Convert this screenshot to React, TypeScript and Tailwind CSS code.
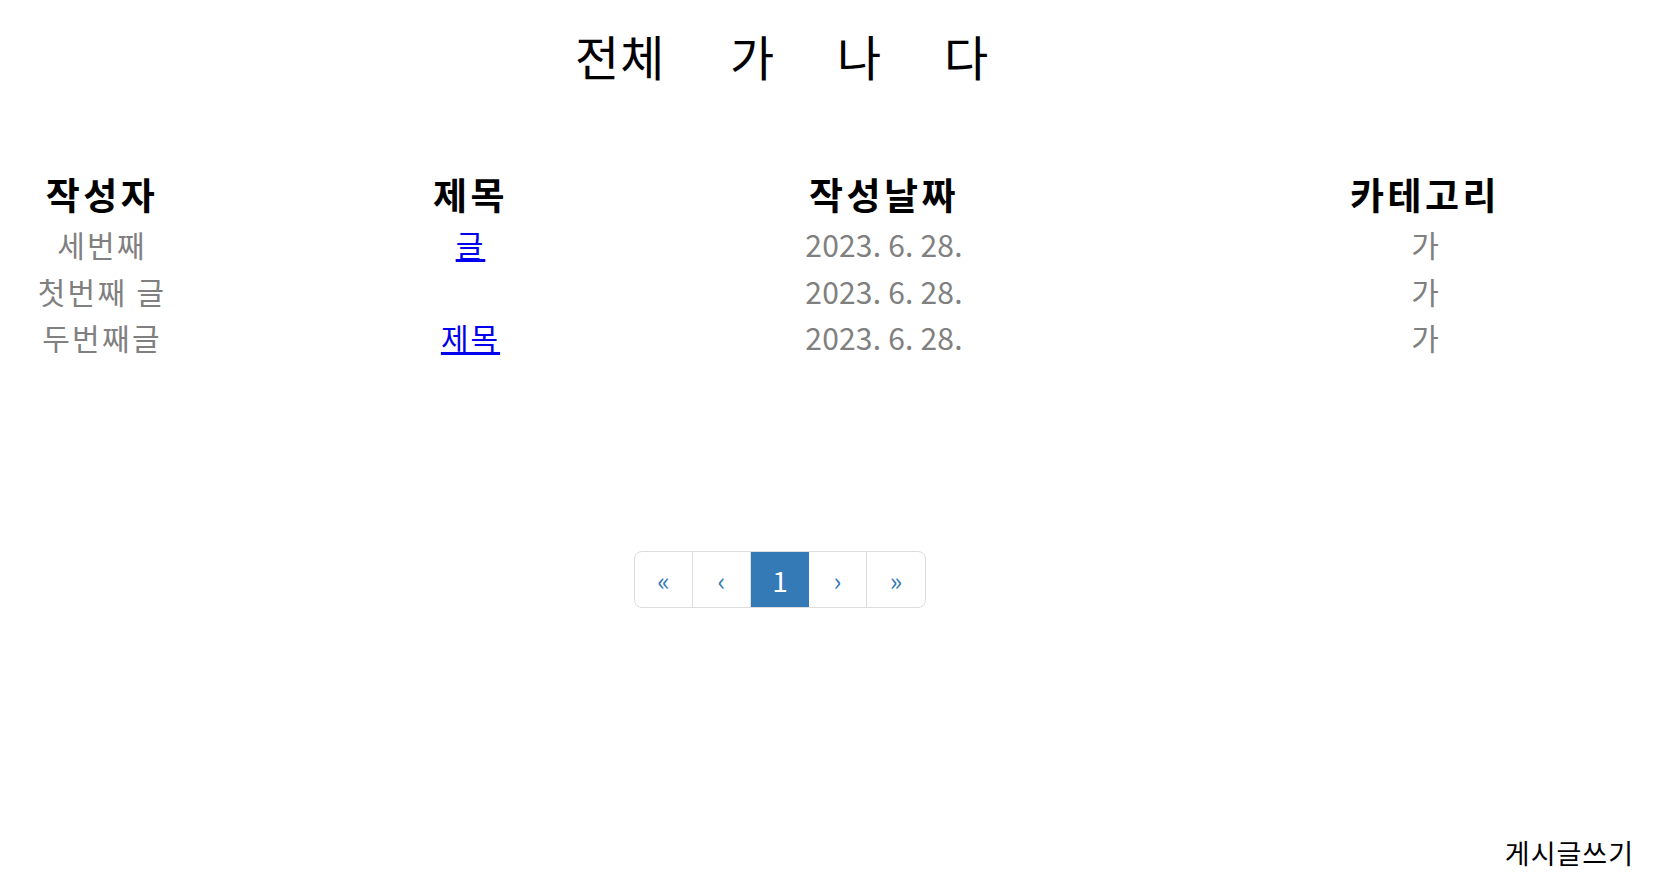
const rows = [
  { author: '세번째', title: '글', date: '2023. 6. 28.', category: '가' },
  { author: '첫번째 글', title: '', date: '2023. 6. 28.', category: '가' },
  { author: '두번째글', title: '제목', date: '2023. 6. 28.', category: '가' },
];

const font = { fontFamily: '"Noto Sans CJK KR", "Noto Sans", sans-serif' };

export default function App() {
  return (
    <div className="relative h-[892px] w-full bg-white" style={font}>
      {/* 카테고리 필터 */}
      <nav className="grid h-[110px] grid-cols-[155px_107px_107px_auto] items-center pl-[575px] text-[48px] leading-none tracking-[1px] text-black">
        <a className="cursor-pointer">전체</a>
        <a className="cursor-pointer">가</a>
        <a className="cursor-pointer">나</a>
        <a className="cursor-pointer">다</a>
      </nav>

      <div className="mt-[55px]">
        <div className="grid h-[56.5px] grid-cols-[204px_533px_294px_1fr] items-start pt-[2px] text-center text-[37px] font-bold tracking-[3.5px] text-black">
          <div>작성자</div>
          <div>제목</div>
          <div>작성날짜</div>
          <div className="pl-[142px]">카테고리</div>
        </div>
        {rows.map((r, i) => (
          <div
            key={i}
            className="grid h-[46.5px] grid-cols-[204px_533px_294px_1fr] items-center text-center text-[30px] text-[#808080]"
          >
            <div className="tracking-[2.3px]">{r.author}</div>
            <div className="tracking-[2px]">
              {r.title && (
                <a href="#" className="text-[#0000ee] underline underline-offset-2">
                  {r.title}
                </a>
              )}
            </div>
            <div className="tracking-[0.2px]">{r.date}</div>
            <div className="pl-[142px]">{r.category}</div>
          </div>
        ))}
      </div>

      <div className="mt-[190px] flex w-[1560px] justify-center">
        <ul className="flex h-[57px] overflow-hidden rounded-[8px] border border-[#dddddd] text-[26px] text-[#337ab7]">
          <li className="flex w-[58px] items-center justify-center border-r border-[#dddddd]">«</li>
          <li className="flex w-[58px] items-center justify-center border-r border-[#dddddd]">‹</li>
          <li className="flex w-[58px] items-center justify-center bg-[#337ab7] text-[28px] text-white">1</li>
          <li className="flex w-[58px] items-center justify-center border-r border-[#dddddd]">›</li>
          <li className="flex w-[58px] items-center justify-center">»</li>
        </ul>
      </div>

      <div className="absolute bottom-[19px] right-[43px] text-[27px] tracking-[1px] text-black">
        <a className="cursor-pointer">게시글쓰기</a>
      </div>
    </div>
  );
}
